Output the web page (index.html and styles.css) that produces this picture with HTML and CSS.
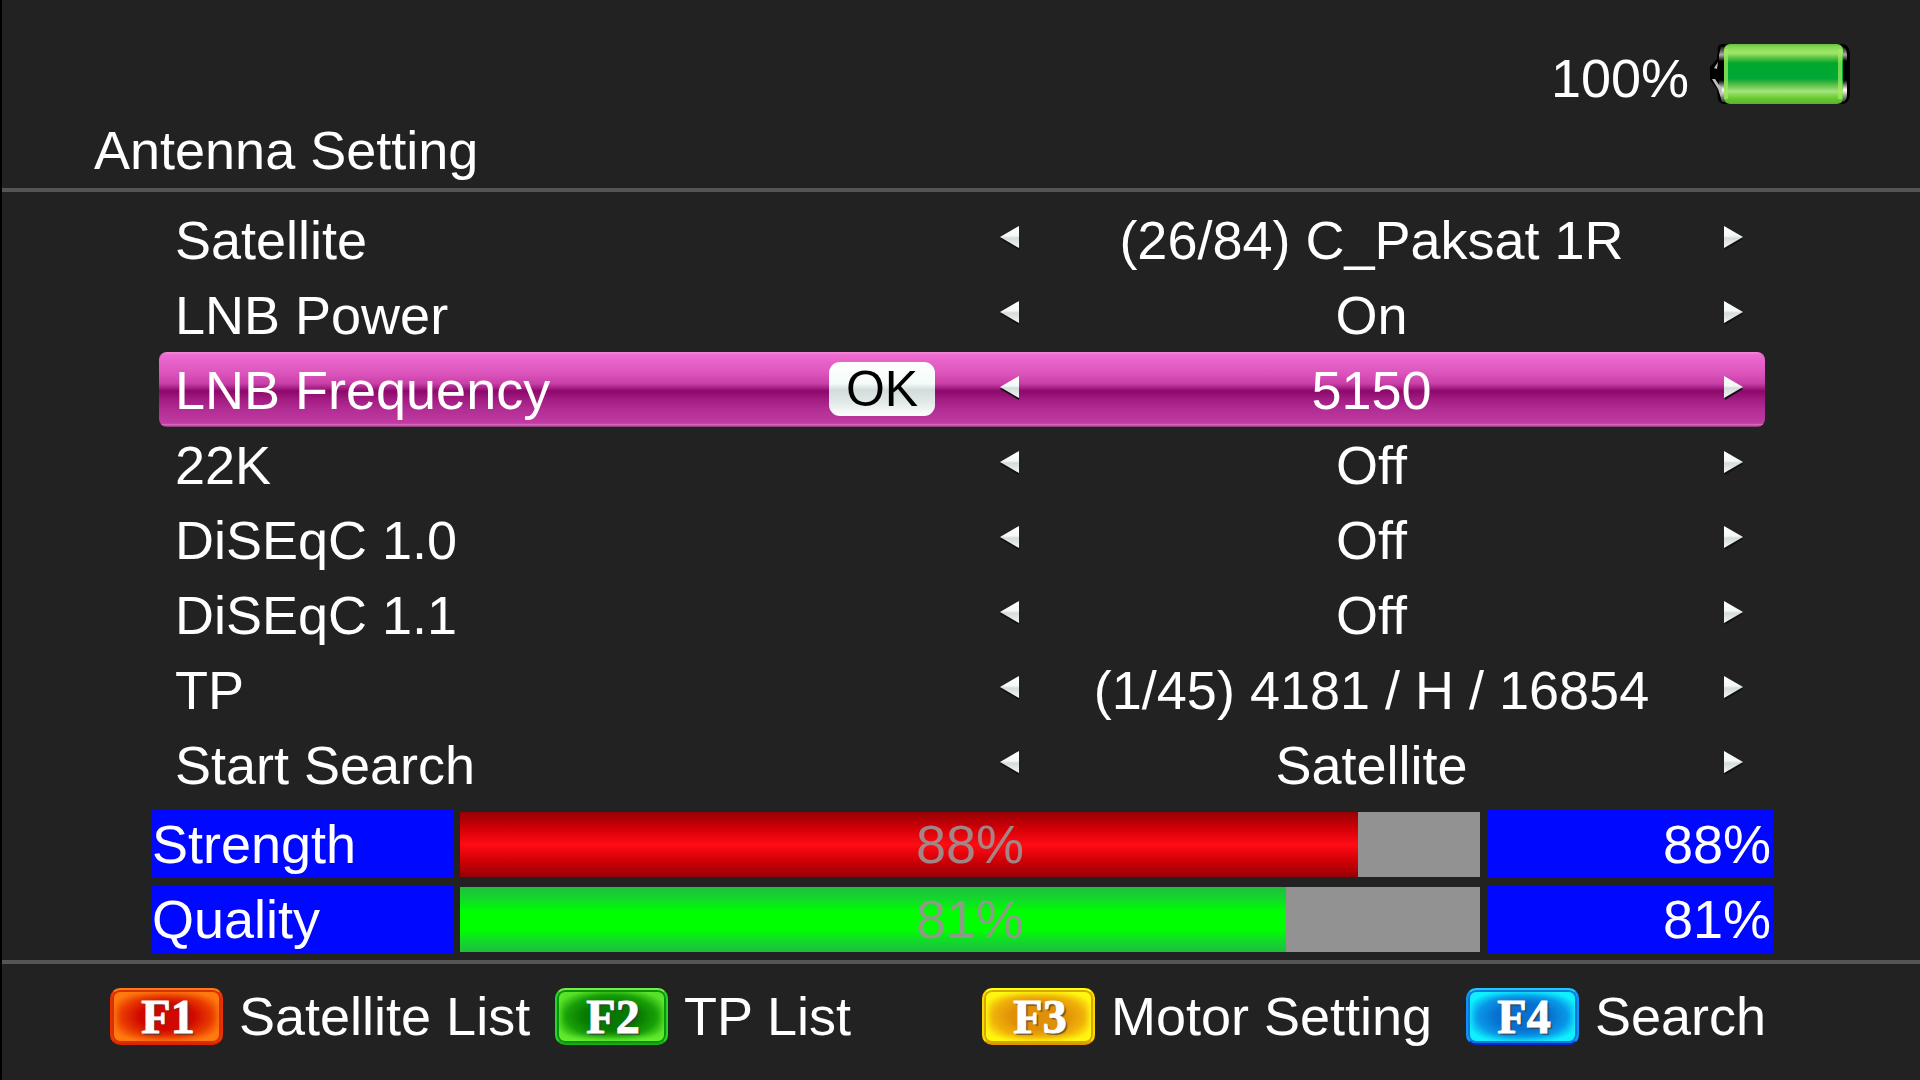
FILE: index.html
```html
<!DOCTYPE HTML>
<html lang="en">
<head>
	<meta charset="utf-8">
	<title>Antenna Setting</title>
	<link rel="stylesheet" href="styles.css">
</head>
<body>
<svg class="defs" width="0" height="0" aria-hidden="true">
	<defs>
		<linearGradient id="silver" x1="0" y1="0" x2="0" y2="1">
			<stop offset="0" stop-color="#fff"/>
			<stop offset=".45" stop-color="#f4f8f7"/>
			<stop offset=".55" stop-color="#d4dbda"/>
			<stop offset="1" stop-color="#f4f8f7"/>
		</linearGradient>
		<symbol id="left" viewBox="0 0 20 24">
			<path d="M1 13L20 3V24Z" fill="#111"/>
			<path d="M1 11L20 0V22Z" fill="url(#silver)"/>
		</symbol>
		<symbol id="right" viewBox="0 0 20 24">
			<path d="M0 3L19 13L1 24Z" fill="#111"/>
			<path d="M0 0L19 11L0 22Z" fill="url(#silver)"/>
		</symbol>
	</defs>
</svg>

<header class="header">
	<div class="status">
		<span>100%</span>
		<svg class="battery" viewBox="0 0 142 62" aria-hidden="true">
			<defs>
				<linearGradient id="cell" x1="0" y1="0" x2="0" y2="1">
					<stop offset="0" stop-color="#6dbb45"/>
					<stop offset=".05" stop-color="#84d94f"/>
					<stop offset=".15" stop-color="#a0e66c"/>
					<stop offset=".24" stop-color="#4fbf3c"/>
					<stop offset=".32" stop-color="#00a82e"/>
					<stop offset=".58" stop-color="#00a836"/>
					<stop offset=".66" stop-color="#4cb943"/>
					<stop offset=".79" stop-color="#a5e57b"/>
					<stop offset=".9" stop-color="#67cc32"/>
					<stop offset="1" stop-color="#5cae30"/>
				</linearGradient>
				<linearGradient id="shell" x1="0" y1="0" x2="0" y2="1">
					<stop offset="0" stop-color="#222"/>
					<stop offset=".14" stop-color="#aaa"/>
					<stop offset=".26" stop-color="#000"/>
					<stop offset=".6" stop-color="#000"/>
					<stop offset=".78" stop-color="#fff"/>
					<stop offset="1" stop-color="#333"/>
				</linearGradient>
			</defs>
			<path d="M9 4Q10 1 14 1H134Q140 2 141 10V52Q140 60 134 61H14Q10 60 9 56L8 46L1 37V24L8 16Z" fill="#000"/>
			<path d="M12 4H134Q138 6 138 12V50Q138 58 134 59H13L10 48V12Z" fill="url(#shell)"/>
			<path d="M5 25L9 19L8 26ZM3 36L6 36L13 46L12 54L9 46Z" fill="#bbb"/>
			<rect x="15" y="1" width="119" height="60" rx="6" fill="url(#cell)"/>
			<path d="M17 6V56M131 6V56" stroke="#a4ec60" stroke-width="4" opacity=".7"/>
		</svg>
	</div>
	<h1 class="title">Antenna Setting</h1>
</header>

<main class="main">
	<div class="rows">
		<div class="row">
			<div class="name">Satellite</div>
			<div class="picker">
				<button class="arrow" aria-label="Previous"><svg><use href="#left"/></svg></button>
				<output>(26/84) C_Paksat 1R</output>
				<button class="arrow" aria-label="Next"><svg><use href="#right"/></svg></button>
			</div>
		</div>
		<div class="row">
			<div class="name">LNB Power</div>
			<div class="picker">
				<button class="arrow" aria-label="Previous"><svg><use href="#left"/></svg></button>
				<output>On</output>
				<button class="arrow" aria-label="Next"><svg><use href="#right"/></svg></button>
			</div>
		</div>
		<div class="row selected">
			<div class="name">LNB Frequency <button class="ok">OK</button></div>
			<div class="picker">
				<button class="arrow" aria-label="Previous"><svg><use href="#left"/></svg></button>
				<output>5150</output>
				<button class="arrow" aria-label="Next"><svg><use href="#right"/></svg></button>
			</div>
		</div>
		<div class="row">
			<div class="name">22K</div>
			<div class="picker">
				<button class="arrow" aria-label="Previous"><svg><use href="#left"/></svg></button>
				<output>Off</output>
				<button class="arrow" aria-label="Next"><svg><use href="#right"/></svg></button>
			</div>
		</div>
		<div class="row">
			<div class="name">DiSEqC 1.0</div>
			<div class="picker">
				<button class="arrow" aria-label="Previous"><svg><use href="#left"/></svg></button>
				<output>Off</output>
				<button class="arrow" aria-label="Next"><svg><use href="#right"/></svg></button>
			</div>
		</div>
		<div class="row">
			<div class="name">DiSEqC 1.1</div>
			<div class="picker">
				<button class="arrow" aria-label="Previous"><svg><use href="#left"/></svg></button>
				<output>Off</output>
				<button class="arrow" aria-label="Next"><svg><use href="#right"/></svg></button>
			</div>
		</div>
		<div class="row">
			<div class="name">TP</div>
			<div class="picker">
				<button class="arrow" aria-label="Previous"><svg><use href="#left"/></svg></button>
				<output>(1/45) 4181 / H / 16854</output>
				<button class="arrow" aria-label="Next"><svg><use href="#right"/></svg></button>
			</div>
		</div>
		<div class="row">
			<div class="name">Start Search</div>
			<div class="picker">
				<button class="arrow" aria-label="Previous"><svg><use href="#left"/></svg></button>
				<output>Satellite</output>
				<button class="arrow" aria-label="Next"><svg><use href="#right"/></svg></button>
			</div>
		</div>
	</div>

	<!-- signal meters -->
	<div class="signal">
		<div class="box">Strength</div>
		<div class="meter">
			<div class="fill strength" style="width:88%"></div>
			<span class="percent">88%</span>
		</div>
		<div class="box number">88%</div>

		<div class="box">Quality</div>
		<div class="meter">
			<div class="fill quality" style="width:81%"></div>
			<span class="percent">81%</span>
		</div>
		<div class="box number">81%</div>
	</div>
</main>

<footer class="footer">
	<button class="action"><span class="key red">F1</span>Satellite List</button>
	<button class="action"><span class="key green">F2</span>TP List</button>
	<button class="action"><span class="key yellow">F3</span>Motor Setting</button>
	<button class="action"><span class="key blue">F4</span>Search</button>
</footer>
</body>
</html>
```

FILE: styles.css
```css
* {
	box-sizing:border-box;
	}
body {
	background:#222;
	color:#fff;
	font:54px/75px "Liberation Sans", Arial, sans-serif;
	margin:0;
	min-height:100vh;
	border-left:2px solid #000;
	}
button {
	background:none;
	border:0;
	padding:0;
	color:inherit;
	font:inherit;
	cursor:pointer;
	}
.defs {
	position:absolute;
	}

/* header */
.header {
	padding:41px 69px 0 92px;
	border-bottom:4px solid #555;
	}
.status {
	display:flex;
	justify-content:flex-end;
	gap:20px;
	}
.battery {
	width:142px;
	height:62px;
	margin-top:2px;
	}
.title {
	margin:-3px 0 0;
	font-size:54px;
	font-weight:normal;
	}

/* settings */
.main {
	padding:10px 147px 7px 150px;
	border-bottom:4px solid #555;
	}
.rows {
	margin:0 8px 8px 7px;
	}
.row {
	display:grid;
	grid-template-columns:824fr 745fr;
	padding:2px 21px 0 16px;
	border-radius:8px;
	line-height:73px;
	}
.selected {
	background:linear-gradient(#f58ad8 0, #ee6bd0 4%, #dc55bc 28%, #c83fa8 42%, #a52085 48%, #8c086a 52%, #a01a80 62%, #b02c92 75%, #c03ba2 95%, #d870bd 97%, #80306c 100%);
	}
.name {
	display:flex;
	align-items:center;
	justify-content:space-between;
	padding-right:64px;
	}
.ok {
	width:106px;
	height:54px;
	margin-bottom:4px;
	background:linear-gradient(#fff 0, #f4fbf9 40%, #d2dcda 52%, #e2eae8 75%, #fff 100%);
	border-radius:11px;
	color:#000;
	font-size:50px;
	line-height:54px;
	}
.picker {
	display:flex;
	justify-content:space-between;
	}
.arrow {
	display:flex;
	padding-top:22px;
	}
.arrow svg {
	width:20px;
	height:24px;
	}

/* meters */
.signal {
	display:grid;
	grid-template-columns:301fr 1020fr 286fr;
	gap:7px;
	line-height:68px;
	}
.box {
	background:#0008ff;
	}
.number {
	padding-right:2px;
	text-align:right;
	}
.meter {
	position:relative;
	margin:2px 0 1px;
	background:#929292;
	line-height:65px;
	text-align:center;
	}
.fill {
	height:100%;
	}
.strength {
	background:linear-gradient(#960005, #d80008 28%, #ff0c14 50%, #d80008 72%, #960005);
	}
.quality {
	background:linear-gradient(#20bd40, #10dc28 20%, #00ff00 38%, #00ff00 66%, #10dc28 82%, #20bd40);
	}
.percent {
	position:absolute;
	inset:0;
	color:rgba(156,146,146,.9);
	}

/* function keys */
.footer {
	display:grid;
	grid-template-columns:445fr 427fr 484fr 307fr;
	padding:15px 147px 0 108px;
	}
.action {
	display:flex;
	align-items:center;
	gap:16px;
	white-space:nowrap;
	}
.key {
	width:113px;
	height:57px;
	padding-left:3px;
	border:2px solid;
	border-radius:10px;
	font:bold 48px/53px "Liberation Serif", "Times New Roman", serif;
	text-align:center;
	text-shadow:2px 2px 1px rgba(60,60,60,.7);
	-webkit-text-stroke:1px #fff;
	}
.red {
	border-color:#ff7a12 #e83008 #e02000;
	background:radial-gradient(ellipse at 50% 50%, #d00800 35%, #e83a00 58%, #ff7a10 78%);
	box-shadow:inset 0 0 0 2px #d83000, inset 0 0 6px 3px #ff7a10;
	}
.green {
	border-color:#70f040 #20d820 #10b010;
	background:radial-gradient(ellipse at 50% 50%, #087800 35%, #18a008 58%, #58e028 78%);
	box-shadow:inset 0 0 0 2px #109010, inset 0 -3px 6px 2px #68f030;
	}
.yellow {
	border-color:#ffff10 #f8d800 #e89000;
	background:radial-gradient(ellipse at 50% 50%, #e09008 35%, #f0b008 58%, #fff010 78%);
	box-shadow:inset 0 0 0 2px #d8a800, inset 0 0 6px 3px #ffff10;
	}
.blue {
	border-color:#20c8ff #1090f8 #0828d8;
	background:radial-gradient(ellipse at 50% 50%, #0870d0 35%, #0898e8 58%, #10f0ff 78%);
	box-shadow:inset 0 0 0 2px #1078d8, inset 0 0 6px 3px #10f0ff;
	}
```
